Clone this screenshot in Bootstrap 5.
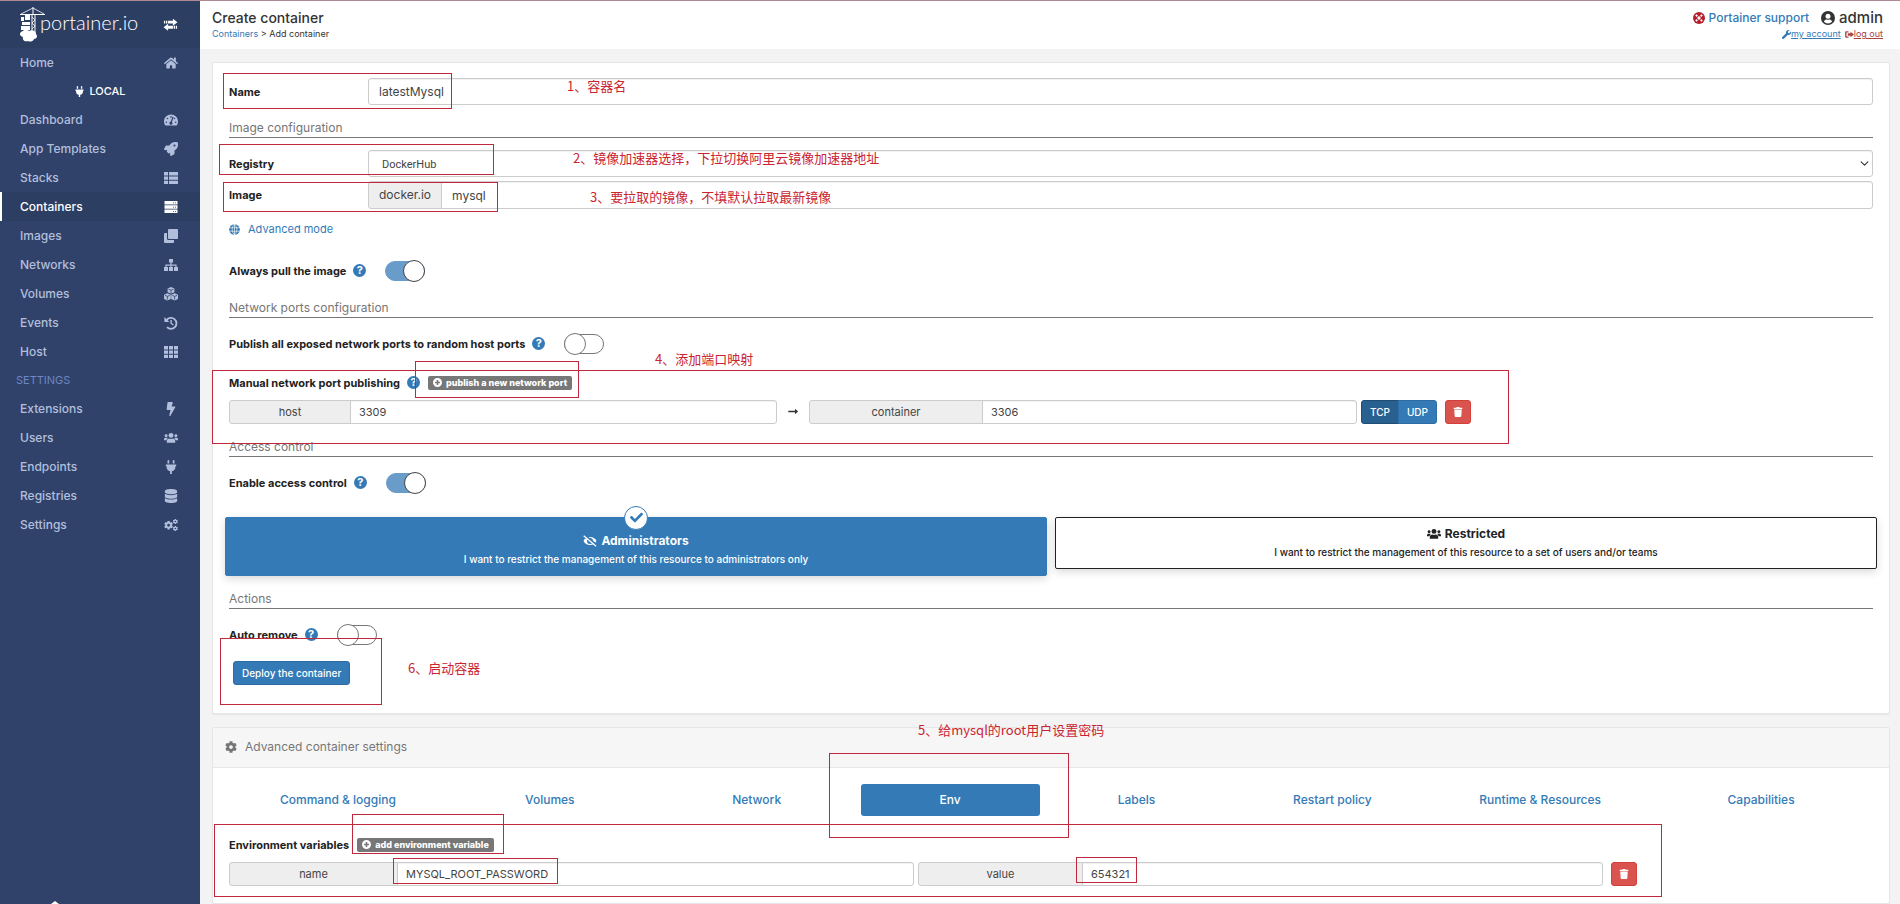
<!DOCTYPE html>
<html lang="en">
<head>
<meta charset="utf-8">
<meta name="viewport" content="width=device-width, initial-scale=1">
<title>Portainer</title>
<link href="https://cdn.jsdelivr.net/npm/bootstrap@5.3.0/dist/css/bootstrap.min.css" rel="stylesheet">
<style>
:root{--blue:#337ab7;--navy:#30426a;--rule:#777}
body{font-family:Inter,"Noto Sans CJK SC",sans-serif;font-size:11px;line-height:16px;color:#333;background:#f3f3f3}
a{color:var(--blue);text-decoration:none}
.ico{width:1em;height:1em;fill:currentColor;flex:none}
.shell{min-height:100vh;border-top:1px solid #b08a92}
.side{width:200px;background:var(--navy);flex:none}
.side-top{height:47px;background:#2d3e63;color:#fff;padding:0 22px 0 20px}
.brand-mark{width:26px;height:36px}
.brand-text{font:300 20px/24px Lato,sans-serif;color:#fff;padding-bottom:6px;margin-left:-6px}
.side .nav-link{height:29px;padding:0 22px 0 20px;color:#b2bfdc;font-size:12px;font-weight:500}
.side .nav-link .ico{width:14px;height:14px}
.side .nav-link.active{background:#2d3e63;color:#fff;border-left:2px solid #fff;padding-left:18px}
.side-cap{height:28px;font-size:11px}
.local-cap{color:#fff;font-weight:500}
.set-cap{color:#6d86c4;padding-left:16px}
.side-foot{width:10px;height:3px;fill:#fff;margin-left:50px}
.swap-ico{font-size:15px}
.top-bar{height:48px;background:#fff;padding:7px 17px 0 12px}
.page-name{font-size:14px;line-height:20px;font-weight:500}
.tiny-line{font-size:9px;line-height:12px}
.support{font-size:12px}
.user-name{font-size:15px;font-weight:500}
.out-link{color:#a94442}
.life-ico{font-size:12px;color:#b5202e}
.tiny-line a.u{text-decoration:underline}
.work{padding:13px 10px 0 12px}
.pane{background:#fff;border:1px solid #e6e6e6;border-radius:2px;box-shadow:0 1px 1px rgba(0,0,0,.05)}
.pane-a{padding:15px 16px 28px}
.pane-b{margin-top:13px}
.pane-head{height:40px;background:#f6f6f6;border-bottom:1px solid #e6e6e6;color:#767676;font-size:12px;padding-left:12px}
.pane-b .inner{padding:16px 16px 16px}
.lab{font-weight:700;color:#222}
.row-lab{width:139px;flex:none}
.sect{height:18px;border-bottom:1px solid var(--rule);color:#767676;font-size:12px;line-height:16px}
.form-control,.form-select,.input-group-text{font-size:11px;line-height:16px;border-color:#ccc;border-radius:3px;color:#444;padding:0 8px;box-shadow:inset 0 1px 1px rgba(0,0,0,.06)}
.input-group-text{background:#eee;justify-content:center;box-shadow:none}
.big{height:27px}
.tall{height:28px}
.big .form-control,.big .input-group-text{font-size:12px;padding:0 10px}
.form-select{font-family:Roboto,sans-serif;padding:2px 13px 0;background-position:right 3px center;background-size:9px 9px}
.sm-row{height:24px}
.w4{width:33.3333%}.w5{width:41.6667%}
.ad-host{width:122px}.ad-cont{width:174px}.ad-name{width:169px}.ad-val{width:165px}
.help{width:13px;height:13px;flex:none;border-radius:50%;background:var(--blue);color:#fff;font-weight:700;font-size:11px;line-height:13px;text-align:center;margin-left:7px}
.sw-row{height:22px}
.sw{appearance:none;width:40px;height:20px;border:1px solid #777;border-radius:10px;margin:0 0 0 19px;background:#fff;flex:none}
.sw::before{content:"";display:block;width:22px;height:22px;margin:-2px 0 0 -1px;border:1px solid #777;border-radius:50%;background:#fff}
.sw:checked{background:#699cc9;border-color:#699cc9}
.sw:checked::before{margin-left:17px;border-color:#444}
.btn{font-size:10px;line-height:16px;font-weight:500;padding:0 8px;border-radius:3px;height:24px}
.btn-blue{background:var(--blue);border-color:#2e6da4;color:#fff}
.btn-on{background:#286090;border-color:#204d74;color:#fff}
.btn-red{background:#d9534f;border-color:#d43f3a;color:#fff;width:26px;padding:0}
.tag-btn{border:0;background:#777;color:#fff;border-radius:2px;height:14px;font-size:9px;line-height:14px;font-weight:800;padding:0 5px}
.choice{margin:23px -4px 0;gap:8px}
.choice button{flex:1 1 0;border:1px solid #222;border-radius:2px;background:#fff;color:#222;height:52px;padding:0;box-shadow:0 3px 8px rgba(0,0,0,.15);font-size:10px;line-height:18px;font-weight:500}
.choice button.sel{height:59px;background:var(--blue);border-color:var(--blue);color:#fff;padding-top:8px}
.choice strong{font-size:12px}
.choice strong .ico{width:14px;height:14px}
.tick{top:-12px;left:50%;width:24px;height:24px;margin-left:-12px;border-radius:50%;background:#fff;border:1px solid var(--blue);color:var(--blue);font-size:13px}
.tabs{display:grid;grid-template-columns:218fr 206fr 208fr 179fr 194fr 198fr 218fr 224fr}
.tabs .nav-link{height:32px;padding:0;color:var(--blue);font-size:12px;font-weight:500;border-radius:3px}
.tabs .nav-link.active{background:var(--blue);color:#fff}
.g4{margin-top:4px}.g9{margin-top:9px}.g12{margin-top:12px}.g15{margin-top:15px}.g18{margin-top:18px}.g21{margin-top:21px}.g20{margin-top:20px}
/* red callouts laid over the form */
.mk{position:absolute;border:1px solid #c1283c;pointer-events:none}
.say{position:absolute;color:#cb2431;font:13px/18px "Noto Sans CJK SC",sans-serif;white-space:nowrap;pointer-events:none}
.m1{left:223px;top:73px;width:229px;height:36px}
.m2{left:219px;top:144px;width:275px;height:31px}
.m3{left:223px;top:182px;width:275px;height:30px}
.m4{left:212px;top:370px;width:1297px;height:74px}
.m5{left:415px;top:361px;width:164px;height:37px}
.m6{left:220px;top:638px;width:162px;height:67px}
.m7{left:829px;top:753px;width:240px;height:85px}
.m8{left:352px;top:814px;width:152px;height:40px}
.m9{left:214px;top:824px;width:1448px;height:73px}
.m10{left:393px;top:858px;width:165px;height:26px}
.m11{left:1076px;top:857px;width:61px;height:26px}
.s1{left:567px;top:77px}.s2{left:573px;top:149px}.s3{left:590px;top:188px}
.s4{left:655px;top:350px}.s5{left:918px;top:721px}.s6{left:408px;top:659px}
</style>
</head>
<body>
<svg width="0" height="0" class="position-absolute" aria-hidden="true"><defs>
<symbol id="plug" viewBox="-64 0 512 512"><path d="M320 32a32 32 0 0 0-64 0v96h64zm48 128H16a16 16 0 0 0-16 16v32a16 16 0 0 0 16 16h16v32a160.07 160.07 0 0 0 128 156.8V512h64v-99.2A160.07 160.07 0 0 0 352 256v-32h16a16 16 0 0 0 16-16v-32a16 16 0 0 0-16-16zM128 32a32 32 0 0 0-64 0v96h64z"/></symbol>
<symbol id="home" viewBox="0 0 576 512"><path d="M280.37 148.26L96 300.11V464a16 16 0 0 0 16 16l112.06-.29a16 16 0 0 0 15.92-16V368a16 16 0 0 1 16-16h64a16 16 0 0 1 16 16v95.64a16 16 0 0 0 16 16.05L464 480a16 16 0 0 0 16-16V300L295.67 148.26a12.19 12.19 0 0 0-15.3 0zM571.6 251.47L488 182.56V44.05a12 12 0 0 0-12-12h-56a12 12 0 0 0-12 12v72.61L318.47 43a48 48 0 0 0-61 0L4.34 251.47a12 12 0 0 0-1.6 16.9l25.5 31A12 12 0 0 0 45.15 301l235.22-193.74a12.19 12.19 0 0 1 15.3 0L530.9 301a12 12 0 0 0 16.9-1.6l25.5-31a12 12 0 0 0-1.7-16.93z"/></symbol>
<symbol id="dash" viewBox="0 0 576 512"><path fill-rule="evenodd" d="M288 32C129 32 0 161 0 320c0 53 14 102 39 145 6 9 16 15 27 15h444c11 0 21-6 27-15 25-43 39-92 39-145C576 161 447 32 288 32zm0 64a32 32 0 1 1 0 64 32 32 0 0 1 0-64zM96 384a32 32 0 1 1 0-64 32 32 0 0 1 0 64zm48-160a32 32 0 1 1 0-64 32 32 0 0 1 0 64zm246-72l-62 185a64 64 0 1 1-46-15l62-185c10-28 54-14 46 15zm42 72a32 32 0 1 1 0-64 32 32 0 0 1 0 64zm48 160a32 32 0 1 1 0-64 32 32 0 0 1 0 64z"/></symbol>
<symbol id="rocket" viewBox="0 0 512 512"><path d="M505 19c-1-5-7-11-12-12C461 0 436 0 410 0 307 0 245 55 199 128H95c-16 0-36 12-43 26L3 253a28 28 0 0 0-3 11 24 24 0 0 0 24 24h104l-23 22c-11 12-13 33 0 46l51 51c11 11 32 13 45 0l23-23v104a24 24 0 0 0 24 24 28 28 0 0 0 11-3l98-49c15-7 27-26 27-43V313c73-46 128-109 128-211 0-26 0-51-7-83zM384 168a40 40 0 1 1 40-40 40 40 0 0 1-40 40z"/></symbol>
<symbol id="list" viewBox="0 0 14 14"><path d="M0 1h4v3.400H0zM5 1h9v3.400H5zM0 5.400h4v3.400H0zM5 5.400h9v3.400H5zM0 9.800h4v3.200H0zM5 9.800h9v3.200H5z"/></symbol>
<symbol id="server" viewBox="0 0 14 14"><path fill-rule="evenodd" d="M.5 1h13v3.500H.5zM.5 5.300h13v3.500H.5zM.5 9.600h13v3.400H.5zM9 2.400v.8h1v-.8zm2 0v.8h1v-.8zM9 6.700v.8h1v-.8zm2 0v.8h1v-.8zM9 11v.8h1V11zm2 0v.8h1V11z"/></symbol>
<symbol id="clone" viewBox="0 0 14 14"><path d="M5 0h8a1 1 0 0 1 1 1v8a1 1 0 0 1-1 1H5a1 1 0 0 1-1-1V1a1 1 0 0 1 1-1zM1 4h2v5.500A1.500 1.500 0 0 0 4.500 11H10v2a1 1 0 0 1-1 1H1a1 1 0 0 1-1-1V5a1 1 0 0 1 1-1z"/></symbol>
<symbol id="map" viewBox="0 0 14 14"><path d="M5 1h4v3.500H7.600V6.500H12.600V9H14v4h-4V9h1.400V7.700H7.600V9H9v4H5V9h1.400V7.700H2.600V9H4v4H0V9h1.400V6.500H6.400V4.500H5z"/></symbol>
<symbol id="cubes" viewBox="0 0 14 14"><path d="M7 0l3.400 1.400v3.800L7 6.600 3.600 5.200V1.400zM3.400 6.200L6.800 7.700v4.400L3.400 13.600 0 12.100V7.700zM10.600 6.200L14 7.700v4.400l-3.400 1.500-3.400-1.500V7.700z"/><path d="M4.500 2.200L7 3.200l2.500-1M7 3.200v2.600M1 8.400l2.400 1 2.400-1M3.400 9.400v3.200M8.200 8.400l2.400 1 2.400-1M10.600 9.400v3.200" fill="none" stroke="#30426a" stroke-width=".8"/></symbol>
<symbol id="past" viewBox="0 0 14 14"><path d="M2.600 4A5.500 5.500 0 1 1 3 11.200" fill="none" stroke="currentColor" stroke-width="1.800"/><path d="M.4 1v5h5zM6.400 4h1.400v3l2 1.500-.8 1.100-2.600-2z"/></symbol>
<symbol id="grid" viewBox="0 0 14 14"><path d="M0 1h4v3.400H0zM5 1h4v3.400H5zM10 1h4v3.400h-4zM0 5.400h4v3.400H0zM5 5.400h4v3.400H5zM10 5.400h4v3.400h-4zM0 9.800h4v3.200H0zM5 9.800h4v3.200H5zM10 9.800h4v3.200h-4z"/></symbol>
<symbol id="bolt" viewBox="-96 0 512 512"><path d="M296 160H180.600l42.600-129.800C227.200 15 215.700 0 200 0H56C44 0 33.800 8.900 32.200 20.800l-32 240C-1.700 275.200 9.500 288 24 288h118.700L96.600 482.500c-3.600 15.200 8 29.500 23.300 29.500 8.400 0 16.400-4.400 20.800-12l176-304c9.300-15.900-2.200-36-20.700-36z"/></symbol>
<symbol id="users" viewBox="0 0 16 14"><circle cx="2.400" cy="4.300" r="1.700"/><circle cx="13.600" cy="4.300" r="1.700"/><circle cx="8" cy="4" r="2.800"/><path d="M0 9.500V8.300c0-1 .7-1.700 1.600-1.700h1.600c.5 0 .9.200 1.200.5C3.500 7.700 3 8.600 2.900 9.500zM16 9.500V8.300c0-1-.7-1.700-1.600-1.700h-1.600c-.5 0-.9.200-1.200.5.900.6 1.400 1.500 1.500 2.400zM3.200 12.500v-1.800c0-1.800 1.300-3 3-3 1.200.7 2.400.7 3.600 0 1.700 0 3 1.200 3 3v1.800z"/></symbol>
<symbol id="db" viewBox="-32 0 512 512"><path d="M448 73v46c0 40-100 73-224 73S0 159 0 119V73C0 33 100 0 224 0s224 33 224 73zM448 176v103c0 40-100 73-224 73S0 319 0 279V176c48 33 136 49 224 49s176-16 224-49zm0 160v103c0 40-100 73-224 73S0 479 0 439V336c48 33 136 49 224 49s176-16 224-49z"/></symbol>
<symbol id="cog" viewBox="0 0 512 512"><path d="M487.400 315.700l-42.600-24.600c4.300-23.200 4.300-47 0-70.200l42.600-24.600c4.900-2.800 7.100-8.600 5.500-14-11.100-35.600-30-67.800-54.700-94.600-3.800-4.100-10-5.100-14.800-2.300L380.800 110c-17.900-15.400-38.500-27.300-60.800-35.100V25.800c0-5.600-3.900-10.500-9.400-11.700-36.700-8.200-74.300-7.800-109.200 0-5.500 1.200-9.400 6.100-9.400 11.700V75c-22.200 7.900-42.800 19.800-60.800 35.100L88.700 85.500c-4.900-2.800-11-1.900-14.800 2.300-24.700 26.700-43.600 58.900-54.700 94.600-1.700 5.400.6 11.200 5.500 14L67.300 221c-4.300 23.200-4.300 47 0 70.200l-42.600 24.600c-4.900 2.800-7.100 8.600-5.500 14 11.100 35.600 30 67.800 54.700 94.600 3.800 4.100 10 5.100 14.800 2.300l42.600-24.600c17.900 15.400 38.500 27.300 60.800 35.100v49.200c0 5.600 3.900 10.500 9.400 11.700 36.700 8.200 74.300 7.800 109.200 0 5.500-1.200 9.400-6.100 9.400-11.700v-49.200c22.200-7.900 42.800-19.800 60.800-35.100l42.600 24.600c4.900 2.800 11 1.900 14.800-2.300 24.700-26.700 43.600-58.900 54.700-94.600 1.500-5.500-.7-11.300-5.600-14.100zM256 336c-44.100 0-80-35.900-80-80s35.900-80 80-80 80 35.900 80 80-35.900 80-80 80z"/></symbol>
<symbol id="cogs" viewBox="0 0 16 14"><use href="#cog" x="0" y="2" width="10.500" height="10.500"/><use href="#cog" x="10" y="0" width="6" height="6"/><use href="#cog" x="10" y="8" width="6" height="6"/></symbol>
<symbol id="trash" viewBox="-32 0 512 512"><path d="M432 32H312l-9.400-18.700A24 24 0 0 0 281.100 0H166.800a23.700 23.700 0 0 0-21.400 13.300L136 32H16A16 16 0 0 0 0 48v32a16 16 0 0 0 16 16h416a16 16 0 0 0 16-16V48a16 16 0 0 0-16-16zM53.200 467a48 48 0 0 0 47.900 45h245.800a48 48 0 0 0 47.900-45L416 128H32z"/></symbol>
<symbol id="check" viewBox="0 0 512 512"><path d="M174 439L7 273c-10-10-10-26 0-36l37-36c10-10 26-10 36 0l112 112L432 73c10-10 26-10 36 0l36 36c10 10 10 26 0 36L210 439c-10 10-26 10-36 0z"/></symbol>
<symbol id="wrench" viewBox="0 0 512 512"><path d="M508 109c-2-9-14-12-20-5l-75 74-68-11-11-68 74-75c7-6 4-17-5-20-48-11-100 1-137 38-40 40-50 97-34 147L19 403c-25 25-25 65 0 90s65 25 90 0l213-213c51 17 108 6 148-34 37-37 50-90 38-137z"/></symbol>
<symbol id="out" viewBox="0 0 14 14"><path d="M5.500 2H2.300C1 2 .2 2.800.2 4v6c0 1.200.8 2 2.100 2h3.200v-1.800H2.300V3.800h3.200zM8.600 2.600L14 7l-5.400 4.400V8.800H4.400V5.200h4.200z"/></symbol>
<symbol id="life" viewBox="0 0 14 14"><circle cx="7" cy="7" r="7"/><path d="M2.600 4L4 2.600l1.800 1.800a3 3 0 0 0-1.400 1.400zM10 2.600L11.400 4 9.600 5.800a3 3 0 0 0-1.400-1.400zM2.600 10L4 11.400l1.800-1.800a3 3 0 0 1-1.400-1.400zM10 11.400l1.400-1.400-1.800-1.800a3 3 0 0 1-1.400 1.400z" fill="#fff"/><circle cx="7" cy="7" r="1.900" fill="#fff"/></symbol>
<symbol id="user" viewBox="0 0 14 14"><circle cx="7" cy="7" r="7"/><circle cx="7" cy="5.200" r="2.500" fill="#fff"/><path d="M2.800 10.600c.6-1.500 1.900-2.100 3-2.100.8.300 1.600.3 2.400 0 1.100 0 2.400.6 3 2.100a5.600 5.600 0 0 1-8.400 0z" fill="#fff"/></symbol>
<symbol id="globe" viewBox="0 0 14 14"><circle cx="7" cy="7" r="6.800"/><path d="M0 4.800h14M0 9.200h14M7 0v14M7 .2c-4 3.600-4 10 0 13.600 4-3.600 4-10 0-13.600z" fill="none" stroke="#fff" stroke-width=".8"/></symbol>
<symbol id="plus" viewBox="0 0 14 14"><path fill-rule="evenodd" d="M7 0a7 7 0 1 1 0 14A7 7 0 0 1 7 0zM5.800 3.200v2.600H3.200v2.400h2.600v2.600h2.400V8.200h2.600V5.800H8.200V3.200z"/></symbol>
<symbol id="arrow" viewBox="0 0 14 14"><path d="M1 6h8.500V3.600L13.500 7l-4 3.400V8H1z"/></symbol>
<symbol id="eyeoff" viewBox="0 0 16 14"><path d="M.6 7C2 4 4.700 2.400 8 2.400S14 4 15.400 7C14 10 11.300 11.600 8 11.600S2 10 .6 7z"/><circle cx="8" cy="7" r="3.400" fill="#337ab7"/><path d="M8 5a2 2 0 0 1 2 2.600z"/><path d="M1 0l15 12.500" stroke="#337ab7" stroke-width="3"/><path d="M.8 1L15 13" stroke="currentColor" stroke-width="1.500"/></symbol>
<symbol id="swap" viewBox="0 0 16 14"><path d="M1 3h1.400v3H1zM3.200 3h1.400v3H3.200zM5.400 3h5.200V.8L15.400 4.500l-4.800 3.700V6H5.400zM15 8.400h-1.400v3H15zM12.800 8.400h-1.400v3h1.400zM10.600 8.400H5.400V6.200L.6 9.900l4.800 3.700v-2.200h5.200z"/></symbol>
</defs></svg>

<div class="shell d-flex align-items-stretch position-relative">
  <aside class="side d-flex flex-column">
    <div class="side-top d-flex align-items-center">
      <svg class="brand-mark" viewBox="0 0 26 36" fill="#fff"><path d="M0 7h25v1H0zM12.500 0h1v7h-1zM11.500 8h1v16h-1zM14.500 8h1v22h-1zM1 10h3v4H1zM5 8h5v5H5zM2 15h8v3H2zM1 19h9v4H1z"/><path d="M1 7L13 1l11 6M12 10l3 3-3 3 3 3-3 3" fill="none" stroke="#fff" stroke-width=".8"/><path d="M3 24c2-3 5-1 6 0 3-2 7 0 7 3 2 2 1 5-2 5-1 3-5 3-6 2-3 1-6-1-5-4-4-1-4-5 0-6z"/></svg>
      <span class="brand-text me-auto">portainer.io</span>
      <svg class="ico swap-ico"><use href="#swap"/></svg>
    </div>
    <nav class="nav flex-column flex-nowrap">
      <a class="nav-link d-flex align-items-center justify-content-between" href="#">Home<svg class="ico"><use href="#home"/></svg></a>
      <div class="side-cap local-cap d-flex align-items-center justify-content-center gap-1"><svg class="ico"><use href="#plug"/></svg>LOCAL</div>
      <a class="nav-link d-flex align-items-center justify-content-between" href="#">Dashboard<svg class="ico"><use href="#dash"/></svg></a>
      <a class="nav-link d-flex align-items-center justify-content-between" href="#">App Templates<svg class="ico"><use href="#rocket"/></svg></a>
      <a class="nav-link d-flex align-items-center justify-content-between" href="#">Stacks<svg class="ico"><use href="#list"/></svg></a>
      <a class="nav-link active d-flex align-items-center justify-content-between" href="#" aria-current="page">Containers<svg class="ico"><use href="#server"/></svg></a>
      <a class="nav-link d-flex align-items-center justify-content-between" href="#">Images<svg class="ico"><use href="#clone"/></svg></a>
      <a class="nav-link d-flex align-items-center justify-content-between" href="#">Networks<svg class="ico"><use href="#map"/></svg></a>
      <a class="nav-link d-flex align-items-center justify-content-between" href="#">Volumes<svg class="ico"><use href="#cubes"/></svg></a>
      <a class="nav-link d-flex align-items-center justify-content-between" href="#">Events<svg class="ico"><use href="#past"/></svg></a>
      <a class="nav-link d-flex align-items-center justify-content-between" href="#">Host<svg class="ico"><use href="#grid"/></svg></a>
      <div class="side-cap set-cap d-flex align-items-center">SETTINGS</div>
      <a class="nav-link d-flex align-items-center justify-content-between" href="#">Extensions<svg class="ico"><use href="#bolt"/></svg></a>
      <a class="nav-link d-flex align-items-center justify-content-between" href="#">Users<svg class="ico"><use href="#users"/></svg></a>
      <a class="nav-link d-flex align-items-center justify-content-between" href="#">Endpoints<svg class="ico"><use href="#plug"/></svg></a>
      <a class="nav-link d-flex align-items-center justify-content-between" href="#">Registries<svg class="ico"><use href="#db"/></svg></a>
      <a class="nav-link d-flex align-items-center justify-content-between" href="#">Settings<svg class="ico"><use href="#cogs"/></svg></a>
    </nav>
    <svg class="side-foot mt-auto" viewBox="0 0 10 3"><path d="M5 0l4 3H1z"/></svg>
  </aside>

  <div class="flex-grow-1 d-flex flex-column">
    <header class="top-bar d-flex justify-content-between">
      <div>
        <div class="page-name">Create container</div>
        <div class="tiny-line"><a href="#">Containers</a> &gt; Add container</div>
      </div>
      <div>
        <div class="d-flex align-items-center justify-content-end page-name">
          <a href="#" class="support d-flex align-items-center me-1"><svg class="ico life-ico me-1"><use href="#life"/></svg>Portainer support</a>
          <svg class="ico ms-2 me-1"><use href="#user"/></svg><span class="user-name">admin</span>
        </div>
        <div class="tiny-line d-flex justify-content-end align-items-center">
          <svg class="ico" color="#337ab7"><use href="#wrench"/></svg><a href="#" class="u me-1">my account</a>
          <svg class="ico out-link"><use href="#out"/></svg><a href="#" class="u out-link">log out</a>
        </div>
      </div>
    </header>

    <main class="work flex-grow-1 d-flex flex-column">
      <form class="pane pane-a">
        <div class="d-flex align-items-center big">
          <label class="lab row-lab" for="cname">Name</label>
          <input class="form-control h-100" id="cname" value="latestMysql">
        </div>
        <div class="sect g15">Image configuration</div>
        <div class="d-flex align-items-center big g12">
          <label class="lab row-lab" for="reg">Registry</label>
          <select class="form-select h-100" id="reg"><option>DockerHub</option></select>
        </div>
        <div class="d-flex align-items-center big tall g4">
          <label class="lab row-lab" for="img">Image</label>
          <div class="input-group flex-nowrap h-100"><span class="input-group-text">docker.io</span><input class="form-control h-100" id="img" value="mysql"></div>
        </div>
        <div class="g12"><a href="#" class="d-inline-flex align-items-center gap-2"><svg class="ico"><use href="#globe"/></svg>Advanced mode</a></div>
        <div class="d-flex align-items-center sw-row g21">
          <label class="lab" for="pull">Always pull the image</label><span class="help">?</span><input type="checkbox" class="sw" id="pull" checked>
        </div>
        <div class="sect g18">Network ports configuration</div>
        <div class="d-flex align-items-center sw-row g15">
          <label class="lab" for="pub">Publish all exposed network ports to random host ports</label><span class="help">?</span><input type="checkbox" class="sw" id="pub">
        </div>
        <div class="d-flex align-items-center g20">
          <span class="lab">Manual network port publishing</span><span class="help">?</span>
          <button type="button" class="tag-btn d-flex align-items-center gap-1 ms-2"><svg class="ico"><use href="#plus"/></svg>publish a new network port</button>
        </div>
        <div class="d-flex align-items-center sm-row g9">
          <div class="input-group flex-nowrap w4 h-100"><label class="input-group-text ad-host" for="hp">host</label><input class="form-control h-100" id="hp" value="3309"></div>
          <svg class="ico mx-2 px-0" style="width:16px"><use href="#arrow"/></svg>
          <div class="input-group flex-nowrap w4 h-100"><label class="input-group-text ad-cont" for="cp">container</label><input class="form-control h-100" id="cp" value="3306"></div>
          <div class="btn-group ms-1"><button type="button" class="btn btn-on">TCP</button><button type="button" class="btn btn-blue">UDP</button></div>
          <button type="button" class="btn btn-red d-flex align-items-center justify-content-center ms-2" aria-label="Remove port"><svg class="ico"><use href="#trash"/></svg></button>
        </div>
        <div class="sect g15">Access control</div>
        <div class="d-flex align-items-center sw-row g15">
          <label class="lab" for="acc">Enable access control</label><span class="help">?</span><input type="checkbox" class="sw" id="acc" checked>
        </div>
        <div class="choice d-flex align-items-start">
          <button type="button" class="sel position-relative">
            <span class="tick position-absolute d-flex align-items-center justify-content-center"><svg class="ico"><use href="#check"/></svg></span>
            <strong class="d-flex align-items-center justify-content-center gap-1"><svg class="ico"><use href="#eyeoff"/></svg>Administrators</strong>
            I want to restrict the management of this resource to administrators only
          </button>
          <button type="button">
            <strong class="d-flex align-items-center justify-content-center gap-1"><svg class="ico"><use href="#users"/></svg>Restricted</strong>
            I want to restrict the management of this resource to a set of users and/or teams
          </button>
        </div>
        <div class="sect g15">Actions</div>
        <div class="d-flex align-items-center sw-row g15">
          <label class="lab" for="rm">Auto remove</label><span class="help">?</span><input type="checkbox" class="sw" id="rm">
        </div>
        <button type="button" class="btn btn-blue g15 ms-1 d-block">Deploy the container</button>
      </form>

      <section class="pane pane-b flex-grow-1">
        <div class="pane-head d-flex align-items-center gap-2"><svg class="ico"><use href="#cog"/></svg>Advanced container settings</div>
        <div class="inner">
          <nav class="tabs">
            <a class="nav-link d-flex align-items-center justify-content-center" href="#">Command &amp; logging</a>
            <a class="nav-link d-flex align-items-center justify-content-center" href="#">Volumes</a>
            <a class="nav-link d-flex align-items-center justify-content-center" href="#">Network</a>
            <a class="nav-link active d-flex align-items-center justify-content-center" href="#">Env</a>
            <a class="nav-link d-flex align-items-center justify-content-center" href="#">Labels</a>
            <a class="nav-link d-flex align-items-center justify-content-center" href="#">Restart policy</a>
            <a class="nav-link d-flex align-items-center justify-content-center" href="#">Runtime &amp; Resources</a>
            <a class="nav-link d-flex align-items-center justify-content-center" href="#">Capabilities</a>
          </nav>
          <div class="d-flex align-items-center g21">
            <span class="lab">Environment variables</span>
            <button type="button" class="tag-btn d-flex align-items-center gap-1 ms-2"><svg class="ico"><use href="#plus"/></svg>add environment variable</button>
          </div>
          <div class="d-flex align-items-center sm-row g9">
            <div class="input-group flex-nowrap w5 h-100"><label class="input-group-text ad-name" for="en">name</label><input class="form-control h-100" id="en" value="MYSQL_ROOT_PASSWORD"></div>
            <div class="input-group flex-nowrap w5 h-100 ms-1"><label class="input-group-text ad-val" for="ev">value</label><input class="form-control h-100" id="ev" value="654321"></div>
            <button type="button" class="btn btn-red d-flex align-items-center justify-content-center ms-2" aria-label="Remove variable"><svg class="ico"><use href="#trash"/></svg></button>
          </div>
        </div>
      </section>
    </main>
  </div>
</div>

<div class="mk m1"></div><div class="mk m2"></div><div class="mk m3"></div><div class="mk m4"></div><div class="mk m5"></div><div class="mk m6"></div><div class="mk m7"></div><div class="mk m8"></div><div class="mk m9"></div><div class="mk m10"></div><div class="mk m11"></div>
<div class="say s1">1、容器名</div>
<div class="say s2">2、镜像加速器选择，下拉切换阿里云镜像加速器地址</div>
<div class="say s3">3、要拉取的镜像，不填默认拉取最新镜像</div>
<div class="say s4">4、添加端口映射</div>
<div class="say s5">5、给mysql的root用户设置密码</div>
<div class="say s6">6、启动容器</div>
<script src="https://cdn.jsdelivr.net/npm/bootstrap@5.3.0/dist/js/bootstrap.bundle.min.js"></script>
</body>
</html>
